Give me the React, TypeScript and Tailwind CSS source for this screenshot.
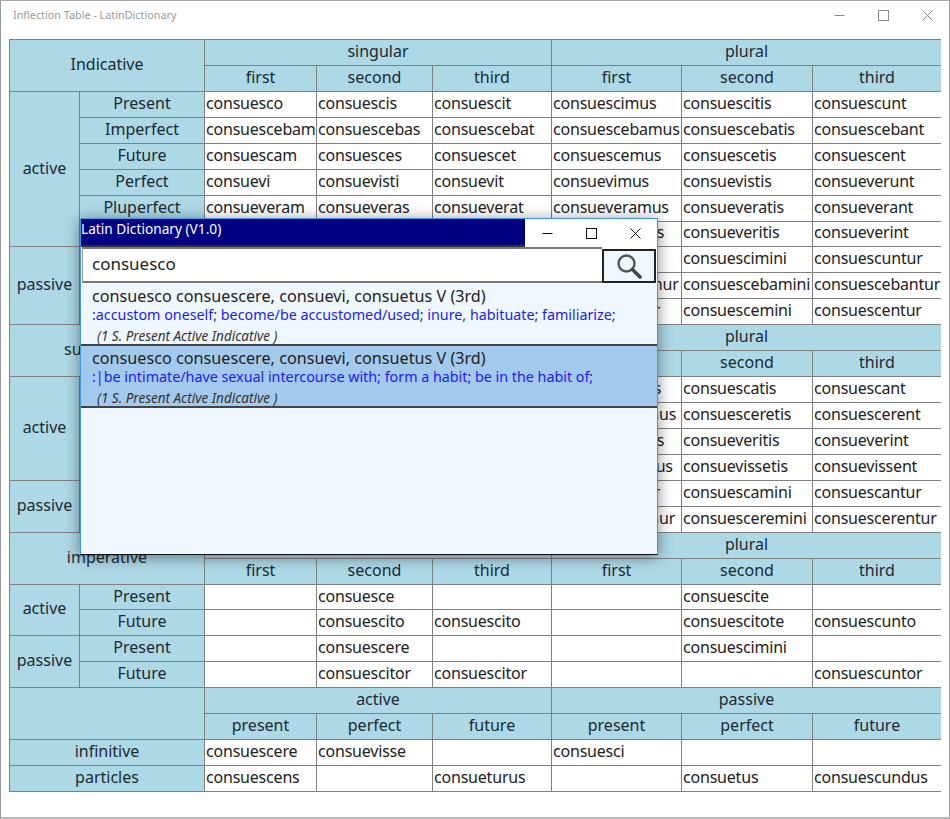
import React from "react"

const font = { fontFamily: '"Noto Sans", "Liberation Sans", sans-serif' }

type Group = { label: string; rows: [string, string[]][] }

const indicative: Group[] = [
  {
    label: "active",
    rows: [
      ["Present", ["consuesco", "consuescis", "consuescit", "consuescimus", "consuescitis", "consuescunt"]],
      ["Imperfect", ["consuescebam", "consuescebas", "consuescebat", "consuescebamus", "consuescebatis", "consuescebant"]],
      ["Future", ["consuescam", "consuesces", "consuescet", "consuescemus", "consuescetis", "consuescent"]],
      ["Perfect", ["consuevi", "consuevisti", "consuevit", "consuevimus", "consuevistis", "consueverunt"]],
      ["Pluperfect", ["consueveram", "consueveras", "consueverat", "consueveramus", "consueveratis", "consueverant"]],
      ["Future Perfect", ["consuevero", "consueveris", "consueverit", "consueverimus", "consueveritis", "consueverint"]],
    ],
  },
  {
    label: "passive",
    rows: [
      ["Present", ["consuescor", "consuesceris", "consuescitur", "consuescimur", "consuescimini", "consuescuntur"]],
      ["Imperfect", ["consuescebar", "consuescebaris", "consuescebatur", "consuescebamur", "consuescebamini", "consuescebantur"]],
      ["Future", ["consuescar", "consuesceris", "consuescetur", "consuescemur", "consuescemini", "consuescentur"]],
    ],
  },
]

const subjunctive: Group[] = [
  {
    label: "active",
    rows: [
      ["Present", ["consuescam", "consuescas", "consuescat", "consuescamus", "consuescatis", "consuescant"]],
      ["Imperfect", ["consuescerem", "consuesceres", "consuesceret", "consuesceremus", "consuesceretis", "consuescerent"]],
      ["Perfect", ["consueverim", "consueveris", "consueverit", "consueverimus", "consueveritis", "consueverint"]],
      ["Pluperfect", ["consuevissem", "consuevisses", "consuevisset", "consuevissemus", "consuevissetis", "consuevissent"]],
    ],
  },
  {
    label: "passive",
    rows: [
      ["Present", ["consuescar", "consuescaris", "consuescatur", "consuescamur", "consuescamini", "consuescantur"]],
      ["Imperfect", ["consuescerer", "consuesceris", "consuesceretur", "consuesceremur", "consuesceremini", "consuescerentur"]],
    ],
  },
]

const imperative: Group[] = [
  {
    label: "active",
    rows: [
      ["Present", ["", "consuesce", "", "", "consuescite", ""]],
      ["Future", ["", "consuescito", "consuescito", "", "consuescitote", "consuescunto"]],
    ],
  },
  {
    label: "passive",
    rows: [
      ["Present", ["", "consuescere", "", "", "consuescimini", ""]],
      ["Future", ["", "consuescitor", "consuescitor", "", "", "consuescuntor"]],
    ],
  },
]

const persons = ["first", "second", "third", "first", "second", "third"]

function Head({ children, className = "" }: { children?: React.ReactNode; className?: string }) {
  return (
    <div className={`flex items-center justify-center overflow-hidden whitespace-nowrap border-l border-t border-[#808080] bg-[#add8e6] pb-[3px] text-[#1c2a33] ${className}`}>
      {children}
    </div>
  )
}

function Cell({ children }: { children?: React.ReactNode }) {
  return (
    <div className="flex items-center overflow-hidden whitespace-nowrap border-l border-t border-[#808080] bg-white pb-[3px] pl-px tracking-[-0.2px] text-[#222]">
      {children}
    </div>
  )
}

function Section({ title, left = "singular", right = "plural", cols = persons }: { title: string; left?: string; right?: string; cols?: string[] }) {
  return (
    <>
      <Head className="col-span-2 row-span-2">{title}</Head>
      <Head className="col-span-3">{left}</Head>
      <Head className="col-span-3">{right}</Head>
      {cols.map((p, i) => (
        <Head key={i}>{p}</Head>
      ))}
    </>
  )
}

const spans: Record<number, string> = { 2: "row-span-2", 3: "row-span-3", 4: "row-span-4", 6: "row-span-6" }

function Groups({ groups }: { groups: Group[] }) {
  return (
    <>
      {groups.map((g) => (
        <React.Fragment key={g.label}>
          <Head className={spans[g.rows.length]}>{g.label}</Head>
          {g.rows.map(([tense, forms]) => (
            <React.Fragment key={tense}>
              <Head>{tense}</Head>
              {forms.map((f, i) => (
                <Cell key={i}>{f}</Cell>
              ))}
            </React.Fragment>
          ))}
        </React.Fragment>
      ))}
    </>
  )
}

function Controls({ dark }: { dark?: boolean }) {
  const stroke = dark ? "#111" : "#8a8a8a"
  return (
    <div className="flex shrink-0">
      <div className="flex h-[28px] w-[44px] items-center justify-center">
        <svg width="11" height="11" viewBox="0 0 11 11"><path d="M0.5 5.5H10.5" stroke={stroke} fill="none" /></svg>
      </div>
      <div className="flex h-[28px] w-[44px] items-center justify-center">
        <svg width="11" height="11" viewBox="0 0 11 11"><rect x="0.5" y="0.5" width="10" height="10" stroke={stroke} fill="none" /></svg>
      </div>
      <div className="flex h-[28px] w-[44px] items-center justify-center">
        <svg width="11" height="11" viewBox="0 0 11 11"><path d="M0.5 0.5L10.5 10.5M10.5 0.5L0.5 10.5" stroke={stroke} fill="none" /></svg>
      </div>
    </div>
  )
}

function Result({ meaning, selected }: { meaning: string; selected?: boolean }) {
  return (
    <div className={`h-[62px] border-b-2 border-[#444] pl-[11px] pt-[2px] ${selected ? "bg-[#a3c9ec]" : ""}`}>
      <div className="h-[20px] text-[16.2px] leading-[20px] text-[#222]">consuesco consuescere, consuevi, consuetus V (3rd)</div>
      <div className="h-[20px] text-[14.3px] leading-[18px] text-[#1a1aff]">{meaning}</div>
      <div className="h-[18px] pl-[5px] text-[13.5px] italic leading-[20px] text-[#333]">(1 S. Present Active Indicative )</div>
    </div>
  )
}

export default function App() {
  return (
    <div style={font} className="relative h-[819px] w-[950px] overflow-hidden border-x border-t border-b-2 border-x-[#999] border-t-[#aaa] border-b-[#bbb] bg-white text-[16px]">
      {/* window title */}
      <div className="flex h-[28px] items-center justify-between">
        <span className="pl-[12px] text-[10.8px] text-[#9a9a9a]">Inflection Table - LatinDictionary</span>
        <Controls />
      </div>

      {/* inflection table */}
      <div className="ml-[8px] mt-[10px] grid h-[753px] w-[932px] grid-cols-[70px_125px_112px_116px_119px_130px_131px_129px] grid-rows-[repeat(29,1fr)] border-b border-r border-[#808080]">
        <Section title="Indicative" />
        <Groups groups={indicative} />
        <Section title="subjunctive" />
        <Groups groups={subjunctive} />
        <Section title="imperative" />
        <Groups groups={imperative} />
        <Section title="" left="active" right="passive" cols={["present", "perfect", "future", "present", "perfect", "future"]} />
        <Head className="col-span-2">infinitive</Head>
        {["consuescere", "consuevisse", "", "consuesci", "", ""].map((f, i) => (
          <Cell key={i}>{f}</Cell>
        ))}
        <Head className="col-span-2">particles</Head>
        {["consuescens", "", "consueturus", "", "consuetus", "consuescundus"].map((f, i) => (
          <Cell key={i}>{f}</Cell>
        ))}
      </div>

      {/* dictionary window floating over the table */}
      <div className="absolute left-[79px] top-[217px] flex h-[337px] w-[578px] flex-col border border-[#3b9ae1] border-b-[#111] bg-[#f0f8ff] shadow-[0_2px_14px_rgba(0,0,0,0.45)]">
        <div className="flex h-[28px] shrink-0 bg-white">
          <div className="flex-1 border-b-2 border-[#333] bg-[#000080] text-[13.7px] leading-[20px] text-white">Latin Dictionary (V1.0)</div>
          <Controls dark />
        </div>
        <div className="flex h-[37px] shrink-0 bg-white pb-px">
          <div className="ml-px flex-1 border-y-2 border-l border-y-[#777] border-l-[#999] pl-[9px] text-[17px] leading-[30px] text-[#222]">consuesco</div>
          <div className="mr-px mt-[2px] flex w-[54px] items-center justify-center border-2 border-[#222] bg-[#f0f8ff]">
            <svg width="26" height="26" viewBox="0 0 26 26">
              <circle cx="10.5" cy="10.5" r="8" fill="#f0f8ff" stroke="#555" strokeWidth="2.4" />
              <path d="M16.5 16.5L24 24" stroke="#444" strokeWidth="3.6" strokeLinecap="round" />
            </svg>
          </div>
        </div>
        <Result meaning=":accustom oneself; become/be accustomed/used; inure, habituate; familiarize;" />
        <Result selected meaning=":|be intimate/have sexual intercourse with; form a habit; be in the habit of;" />
      </div>
    </div>
  )
}
